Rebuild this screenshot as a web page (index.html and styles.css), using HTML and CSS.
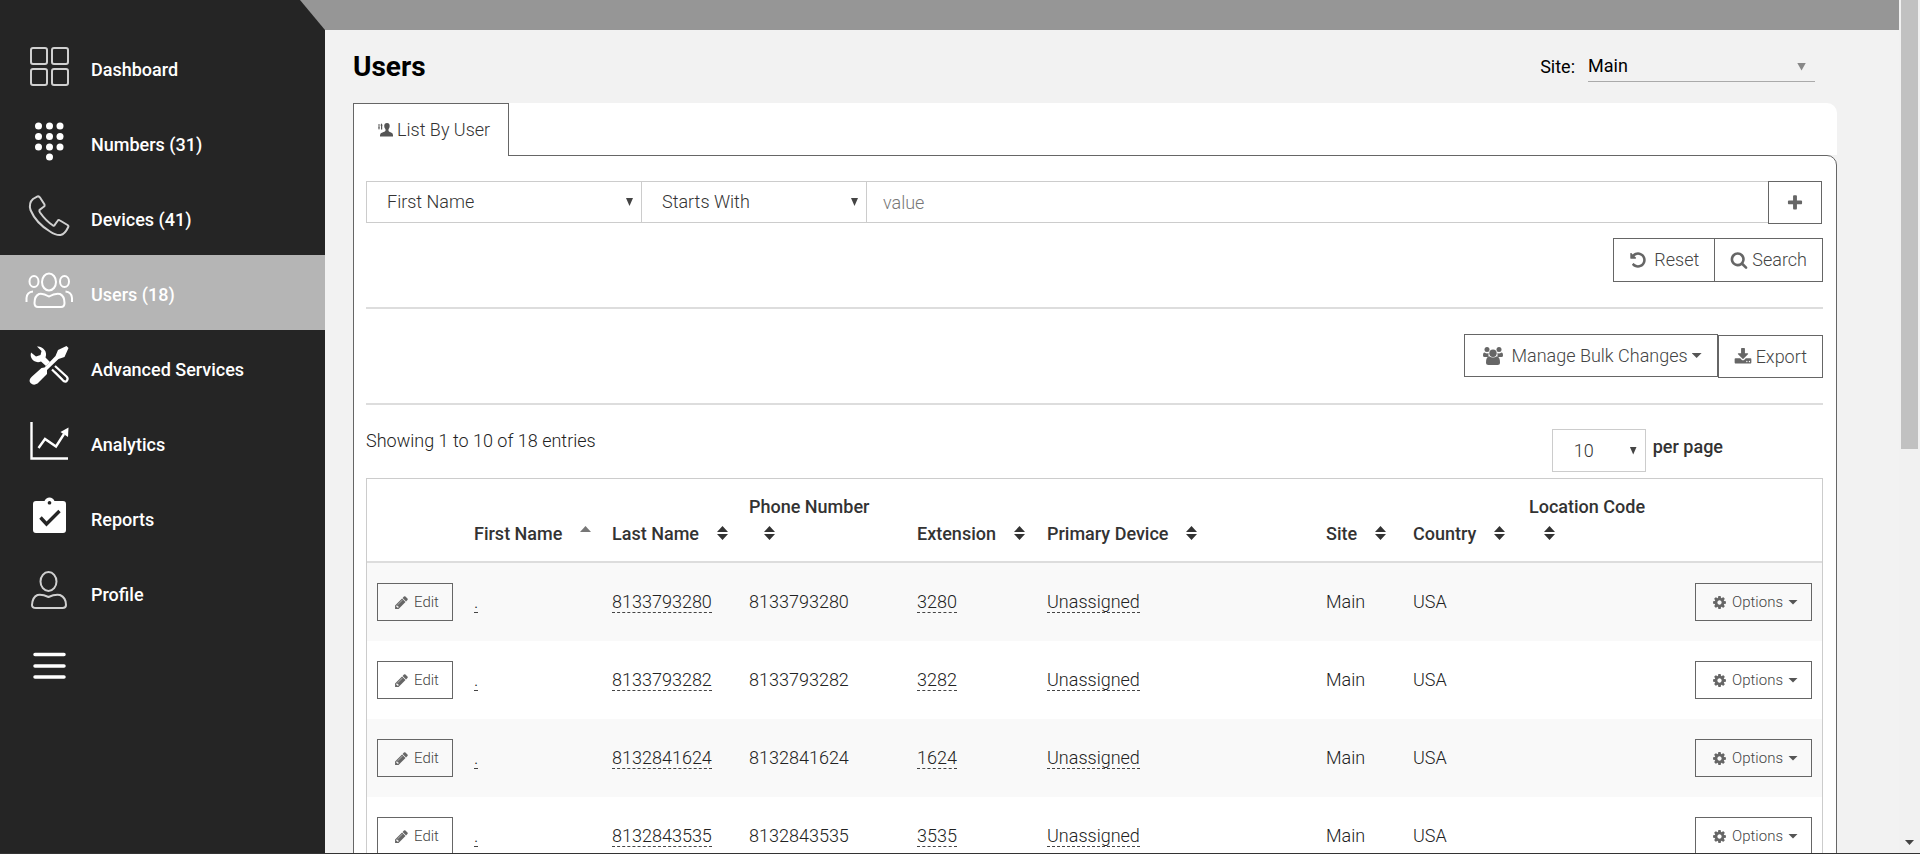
FILE: index.html
```html
<!DOCTYPE html>
<html lang="en">
<head>
<meta charset="utf-8">
<title>Users</title>
<link rel="stylesheet" href="styles.css">
</head>
<body>
<svg class="sprite" aria-hidden="true">
  <symbol id="i-plus" viewBox="0 0 1792 1792"><path d="M1600 736v192q0 40-28 68t-68 28h-416v416q0 40-28 68t-68 28h-192q-40 0-68-28t-28-68v-416h-416q-40 0-68-28t-28-68v-192q0-40 28-68t68-28h416v-416q0-40 28-68t68-28h192q40 0 68 28t28 68v416h416q40 0 68 28t28 68z"/></symbol>
  <symbol id="i-search" viewBox="0 0 1792 1792"><path d="M1216 832q0-185-131.500-316.500t-316.500-131.500-316.500 131.500-131.500 316.500 131.500 316.500 316.500 131.500 316.500-131.500 131.500-316.500zm512 832q0 52-38 90t-90 38q-54 0-90-38l-343-342q-179 124-399 124-143 0-273.500-55.500t-225-150-150-225-55.500-273.500 55.500-273.500 150-225 225-150 273.500-55.500 273.500 55.500 225 150 150 225 55.500 273.500q0 220-124 399l343 343q37 37 37 90z"/></symbol>
  <symbol id="i-undo" viewBox="0 0 1792 1792"><path d="M1664 896q0 156-61 298t-164 245-245 164-298 61q-172 0-327-72.500t-264-204.500q-7-10-6.500-22.500t8.500-20.500l137-138q10-9 25-9 16 2 23 12 73 95 179 147t225 52q104 0 198.500-40.500t163.500-109.500 109.500-163.500 40.500-198.500-40.500-198.500-109.500-163.500-163.500-109.500-198.500-40.500q-98 0-188 35.500t-160 101.500l137 138q31 30 14 69-17 40-59 40h-448q-26 0-45-19t-19-45v-448q0-42 40-59 39-17 69 14l130 129q107-101 244.500-156.500t284.500-55.500q156 0 298 61t245 164 164 245 61 298z"/></symbol>
  <symbol id="i-download" viewBox="0 0 1792 1792"><path d="M1344 1344q0-26-19-45t-45-19-45 19-19 45 19 45 45 19 45-19 19-45zm256 0q0-26-19-45t-45-19-45 19-19 45 19 45 45 19 45-19 19-45zm128-224v320q0 40-28 68t-68 28h-1472q-40 0-68-28t-28-68v-320q0-40 28-68t68-28h465l135 136q58 56 136 56t136-56l136-136h464q40 0 68 28t28 68zm-325-569q17 41-14 70l-448 448q-18 19-45 19t-45-19l-448-448q-31-29-14-70 17-39 59-39h256v-448q0-26 19-45t45-19h256q26 0 45 19t19 45v448h256q42 0 59 39z"/></symbol>
  <symbol id="i-pencil" viewBox="0 0 1792 1792"><path d="M491 1536l91-91-235-235-91 91v107h128v128h107zm523-928q0-22-22-22-10 0-17 7l-542 542q-7 7-7 17 0 22 22 22 10 0 17-7l542-542q7-7 7-17zm-54-192l416 416-832 832h-416v-416zm683 96q0 53-37 90l-166 166-416-416 166-165q36-38 90-38 53 0 91 38l235 234q37 39 37 91z"/></symbol>
  <symbol id="i-cog" viewBox="0 0 1792 1792"><path d="M1152 896q0-106-75-181t-181-75-181 75-75 181 75 181 181 75 181-75 75-181zm512-109v222q0 12-8 23t-20 13l-185 28q-19 54-39 91 35 50 107 138 10 12 10 25t-9 23q-27 37-99 108t-94 71q-12 0-26-9l-138-108q-44 23-91 38-16 136-29 186-7 28-36 28h-222q-14 0-24.500-8.500t-11.500-21.500l-28-184q-49-16-90-37l-141 107q-10 9-25 9-14 0-25-11-126-114-165-168-7-10-7-23 0-12 8-23 15-21 51-66.500t54-70.500q-27-50-41-99l-183-27q-13-2-21-12.500t-8-23.500v-222q0-12 8-23t19-13l186-28q14-46 39-92-40-57-107-138-10-12-10-24 0-10 9-23 26-36 98.500-107.500t94.500-71.500q13 0 26 10l138 107q44-23 91-38 16-136 29-186 7-28 36-28h222q14 0 24.500 8.500t11.500 21.500l28 184q49 16 90 37l142-107q9-9 24-9 13 0 25 10 129 119 165 170 7 8 7 22 0 12-8 23-15 21-51 66.500t-54 70.500q26 50 41 98l183 28q13 2 21 12.500t8 23.500z"/></symbol>
  <symbol id="i-group" viewBox="0 0 20 18"><circle cx="4" cy="2.600" r="2.500"/><circle cx="16" cy="2.600" r="2.500"/><path d="M1.500 5.500Q4 7 5.500 6v4H1.500Q0 10 0 8.500 0 5.500 1.500 5.500zM18.500 5.500Q16 7 14.500 6v4h4Q20 10 20 8.500 20 5.500 18.500 5.500z"/><circle cx="10" cy="6.300" r="3.700"/><path d="M6 9.200Q10 12 14 9.200 17 10 17 15.500q0 2.500-2.500 2.500h-9Q3 18 3 15.500 3 10 6 9.200z"/></symbol>
  <symbol id="i-sort" viewBox="0 0 11 14"><path d="M0 6L5.500 0 11 6zM0 8h11l-5.500 6z"/></symbol>
  <symbol id="i-asc" viewBox="0 0 11 14"><path d="M0 6L5.500 0 11 6z"/></symbol>
</svg>
<div class="app">
  <nav class="sidebar" aria-label="Main">
    <a class="nav-item" href="#"><svg class="nav-icon thin" viewBox="0 0 48 48"><rect x="6" y="6" width="16" height="16" rx="2"/><rect x="27" y="6" width="16" height="16" rx="2"/><rect x="6" y="27" width="16" height="16" rx="2"/><rect x="27" y="27" width="16" height="16" rx="2"/></svg><span>Dashboard</span></a>
    <a class="nav-item" href="#"><svg class="nav-icon solid" viewBox="0 0 48 48"><circle cx="13.500" cy="9" r="3.500"/><circle cx="24.500" cy="9" r="3.500"/><circle cx="35" cy="9" r="3.500"/><circle cx="13.500" cy="19.500" r="3.500"/><circle cx="24.500" cy="19.500" r="3.500"/><circle cx="35" cy="19.500" r="3.500"/><circle cx="13.500" cy="30" r="3.500"/><circle cx="24.500" cy="30" r="3.500"/><circle cx="35" cy="30" r="3.500"/><circle cx="24.500" cy="40" r="3.500"/></svg><span>Numbers (31)</span></a>
    <a class="nav-item" href="#"><svg class="nav-icon thin" viewBox="0 0 48 48"><path d="M12.500 4.500Q14 4 15 5.500L19.500 12.500Q20 14 19 14.500L14.500 18Q14 19 15 20.500 21 29 28 33.500 29.500 34 30 32.500L32.500 29Q33.500 27.500 35 28.500L42.500 33Q44 34 43 35.500 40 42 35.500 43 31 43.500 25 39.500 11 31 5.500 18 3.500 11 8 7z"/></svg><span>Devices (41)</span></a>
    <a class="nav-item active" href="#"><svg class="nav-icon" viewBox="0 0 48 48"><ellipse cx="24" cy="15" rx="7" ry="8.500"/><ellipse cx="9" cy="14.500" rx="4.500" ry="5.500"/><ellipse cx="39.500" cy="14.500" rx="4.500" ry="5.500"/><path d="M1.500 35V31Q2 25 8 24.500M47 35V31Q46.500 25 40.500 24.500M14 27Q18 26 24 29.500 30 26 35 27 39.500 29 39.500 36 39.500 40 36 40H13Q9.500 40 9.500 36 9.500 29 14 27z"/></svg><span>Users (18)</span></a>
    <a class="nav-item" href="#"><svg class="nav-icon solid" viewBox="0 0 48 48"><path d="M12 4.500l4.500 4.500-1 4-4.500 1.500L6 10.500Q4.500 16 9 19q3.500 2 7 .5l5 4.500 4-4-4.500-4.500Q22 11 19.500 8 16.500 4 12 4.500z"/><path d="M27 27.500l11.500 11.500q2.500 1.500 3.500-.5 1.500-2-.5-4L30 24" fill="none" stroke="#fff" stroke-width="2.200"/><path d="M30 30l8 8" stroke="#fff" stroke-width="1.500"/><path d="M43.500 6L41.500 4l-8.500 4-2.500 6-11 11.500-3 .5L7 34.500q-4 3.500-1.500 6.500 3 3 7 .5L22 32v-4L33.500 17l6-2z"/></svg><span>Advanced Services</span></a>
    <a class="nav-item" href="#"><svg class="nav-icon" viewBox="0 0 48 48"><path d="M6.500 5v36.500H43M13.500 31L20 22l11 7.500L39 17" stroke-width="2.400"/><path d="M43.500 10.500l-.5 9.500-7.500-5z" fill="#fff" stroke="none"/></svg><span>Analytics</span></a>
    <a class="nav-item" href="#"><svg class="nav-icon solid" viewBox="0 0 48 48"><path fill-rule="evenodd" d="M11 9h8.500Q21 5.500 24.500 5.500T29.500 9H38q3 0 3 3v26q0 3-3 3H11q-3 0-3-3V12q0-3 3-3zM24.500 9a1.800 1.800 0 1 0 .01 0z"/><path d="M15.500 25.500l6 6.500L34.500 19" stroke="#252525" stroke-width="3.400" fill="none"/></svg><span>Reports</span></a>
    <a class="nav-item" href="#"><svg class="nav-icon thin" viewBox="0 0 48 48"><ellipse cx="23.500" cy="14.500" rx="8" ry="9.500"/><path d="M12.500 28Q17 27 23.500 30 30 27 35 28 41 30.500 41 38 41 41 37.500 41H11Q7 41 7 38 7.500 30 12.500 28z"/></svg><span>Profile</span></a>
    <button class="nav-item" type="button" aria-label="Menu"><svg class="nav-icon" viewBox="0 0 48 48"><path d="M10 12.500h29M10 24h29M10 35h29" stroke-width="3.500" stroke-linecap="round"/></svg></button>
  </nav>
  <div class="page">
    <div class="topbar"></div>
    <main class="main">
      <header class="page-head">
        <h1 class="title">Users</h1>
        <div class="site">
          <label for="site">Site:</label>
          <span class="pick pick-site"><select id="site"><option>Main</option></select></span>
        </div>
      </header>
      <div class="tabs"><button class="tab" type="button"><svg class="tab-icon" viewBox="0 0 15 14"><path d="M9 0q2.700 0 2.700 3 0 1.800-1.200 3.200v1.600q0 .7 2 1.400Q15 10 15 12v1.500H2V12q0-2 3-2.800 2.500-.6 2.500-1.400V6.200Q6.200 5 6.200 3 6.200 0 9 0z"/><path d="M.5 1h1v3.500H2L1 7 0 4.500h.5zM3 6.500v-4h-.7L3.500.3l1.200 2.200H4.200v4z"/></svg>List By User</button></div>
      <section class="panel">
        <form class="filter">
          <span class="pick field"><select aria-label="Field"><option>First Name</option></select></span>
          <span class="pick match"><select aria-label="Match"><option>Starts With</option></select></span>
          <input class="value" type="text" placeholder="value" aria-label="Value">
          <button class="btn add" type="button" aria-label="Add filter"><svg class="icon"><use href="#i-plus"/></svg></button>
        </form>
        <div class="actions search-actions">
          <button class="btn" type="button"><svg class="icon wide-gap"><use href="#i-undo"/></svg>Reset</button>
          <button class="btn joined" type="button"><svg class="icon"><use href="#i-search"/></svg>Search</button>
        </div>
        <hr>
        <div class="actions bulk-actions">
          <button class="btn bulk" type="button"><svg class="icon group"><use href="#i-group"/></svg>Manage Bulk Changes<span class="caret"></span></button>
          <button class="btn export" type="button"><svg class="icon"><use href="#i-download"/></svg>Export</button>
        </div>
        <hr>
        <div class="summary">
          <p class="showing">Showing 1 to 10 of 18 entries</p>
          <div class="paging"><span class="pick pick-count"><select id="count"><option>10</option></select></span><label for="count">per page</label></div>
        </div>
        <table class="users">
          <colgroup><col class="c-edit"><col class="c-first"><col class="c-last"><col class="c-phone"><col class="c-ext"><col class="c-device"><col class="c-site"><col class="c-country"><col class="c-loc"><col class="c-opt"></colgroup>
          <thead><tr><th></th>
            <th>First Name<svg class="sort asc"><use href="#i-asc"/></svg></th>
            <th>Last Name<svg class="sort"><use href="#i-sort"/></svg></th>
            <th>Phone Number<br><svg class="sort below"><use href="#i-sort"/></svg></th>
            <th>Extension<svg class="sort"><use href="#i-sort"/></svg></th>
            <th>Primary Device<svg class="sort"><use href="#i-sort"/></svg></th>
            <th>Site<svg class="sort"><use href="#i-sort"/></svg></th>
            <th>Country<svg class="sort"><use href="#i-sort"/></svg></th>
            <th>Location Code<br><svg class="sort below"><use href="#i-sort"/></svg></th>
            <th></th></tr></thead>
          <tbody>
            <tr><td><button class="btn small" type="button"><svg class="icon"><use href="#i-pencil"/></svg>Edit</button></td><td><a href="#">.</a></td><td><a href="#">8133793280</a></td><td>8133793280</td><td><a href="#">3280</a></td><td><a href="#">Unassigned</a></td><td>Main</td><td>USA</td><td></td><td class="end"><button class="btn small" type="button"><svg class="icon"><use href="#i-cog"/></svg>Options<span class="caret"></span></button></td></tr>
            <tr><td><button class="btn small" type="button"><svg class="icon"><use href="#i-pencil"/></svg>Edit</button></td><td><a href="#">.</a></td><td><a href="#">8133793282</a></td><td>8133793282</td><td><a href="#">3282</a></td><td><a href="#">Unassigned</a></td><td>Main</td><td>USA</td><td></td><td class="end"><button class="btn small" type="button"><svg class="icon"><use href="#i-cog"/></svg>Options<span class="caret"></span></button></td></tr>
            <tr><td><button class="btn small" type="button"><svg class="icon"><use href="#i-pencil"/></svg>Edit</button></td><td><a href="#">.</a></td><td><a href="#">8132841624</a></td><td>8132841624</td><td><a href="#">1624</a></td><td><a href="#">Unassigned</a></td><td>Main</td><td>USA</td><td></td><td class="end"><button class="btn small" type="button"><svg class="icon"><use href="#i-cog"/></svg>Options<span class="caret"></span></button></td></tr>
            <tr><td><button class="btn small" type="button"><svg class="icon"><use href="#i-pencil"/></svg>Edit</button></td><td><a href="#">.</a></td><td><a href="#">8132843535</a></td><td>8132843535</td><td><a href="#">3535</a></td><td><a href="#">Unassigned</a></td><td>Main</td><td>USA</td><td></td><td class="end"><button class="btn small" type="button"><svg class="icon"><use href="#i-cog"/></svg>Options<span class="caret"></span></button></td></tr>
          </tbody>
        </table>
      </section>
    </main>
  </div>
  <div class="scrollbar" aria-hidden="true"><div class="thumb"></div><div class="down"></div></div>
</div>
</body>
</html>
```
FILE: styles.css
```css
* { box-sizing: border-box; }
body { margin: 0; font: 300 18px/24px Roboto, "Liberation Sans", sans-serif; color: #222; background: #f2f2f2; }
button, select, input { font: inherit; color: inherit; margin: 0; border-radius: 0; }
.sprite { position: absolute; width: 0; height: 0; }
.app { display: flex; height: 100vh; overflow: hidden; border-bottom: 1px solid #333; }

.sidebar { flex: 0 0 325px; background: #252525; padding-top: 30px; display: flex; flex-direction: column; }
.nav-item { display: flex; flex: none; align-items: center; gap: 18px; height: 75px; padding: 0 25px; border: 0; background: none; color: #fff; font-weight: 500; text-decoration: none; }
.nav-item span { padding-top: 4px; }
.nav-item.active { background: #b5b5b5; }
.nav-icon { width: 48px; height: 48px; fill: none; stroke: #fff; stroke-width: 2; margin-bottom: 4px; }
.nav-icon.thin { stroke: #d0d0d0; }
.nav-icon.solid { fill: #fff; stroke: none; }

.page { flex: 1; min-width: 0; display: flex; flex-direction: column; }
.topbar { position: relative; height: 30px; flex: none; background: #969696; }
.topbar::before { content: ""; position: absolute; right: 100%; top: 0; width: 25px; height: 30px; background: inherit; clip-path: polygon(0 0, 100% 0, 100% 100%); }
.main { padding: 0 62px 0 28px; }
.page-head { display: flex; align-items: center; justify-content: space-between; height: 73px; padding-right: 22px; color: #000; }
.title { margin: 0; font-size: 28px; line-height: 36px; font-weight: 700; }
.site { display: flex; align-items: center; gap: 13px; font-weight: 400; }

.pick { position: relative; display: block; }
.pick select { appearance: none; width: 100%; height: 42px; padding: 0 20px; border: 1px solid #ccc; background: #fff; color: #333; display: block; }
.pick::after { content: ""; position: absolute; right: 9px; top: 50%; margin-top: -4px; width: 7px; height: 8px; background: #444; clip-path: polygon(0 0, 100% 0, 50% 100%); pointer-events: none; }
.pick-site { width: 227px; }
.pick-site select { height: 30px; padding: 0; border-width: 0 0 1px; border-color: #aaa; background: none; color: #000; }
.pick-site::after { background: #888; width: 9px; }

.tabs { display: flex; background: #fff; border-radius: 0 10px 0 0; }
.tab { display: flex; align-items: center; gap: 4px; height: 53px; padding: 0 18px 0 24px; margin-bottom: -1px; border: 1px solid #666; border-bottom: 0; background: #fff; color: #333; position: relative; }
.tab-icon { width: 15px; height: 14px; fill: #555; }
.panel { border: 1px solid #666; border-radius: 0 10px 0 0; background: #fff; padding: 25px 13px 0 12px; }

.filter { display: flex; align-items: flex-start; padding-right: 1px; }
.field { width: 276px; }
.match { width: 226px; margin-left: -1px; }
.value { flex: 1; height: 42px; margin-left: -1px; border: 1px solid #ccc; padding: 0 16px; background: #fff; }
.value::placeholder { color: #777; opacity: 1; }
.btn { display: flex; align-items: center; justify-content: center; gap: 4px; height: 44px; padding: 0 15px; border: 1px solid #666; background: transparent; color: #444; white-space: nowrap; }
.btn.add { width: 54px; height: 43px; margin-left: -1px; }
.icon { width: 18px; height: 18px; fill: #666; flex: none; }
.wide-gap { margin-right: 3px; }
.icon.group { width: 20px; height: 18px; margin-right: 4px; }
.caret { flex: none; width: 10px; height: 5px; background: #555; clip-path: polygon(0 0, 100% 0, 50% 100%); }
.actions { display: flex; justify-content: flex-end; }
.search-actions { margin: 14px 0 25px; }
.joined { margin-left: -1px; }
.bulk-actions { align-items: flex-end; height: 44px; margin: 25px 0; }
.bulk { align-self: flex-start; height: 43px; padding: 0 15px 0 18px; }
.export { height: 43px; }
hr { margin: 0; border: 0; border-top: 2px solid #ddd; }

.summary { display: flex; justify-content: space-between; padding: 24px 100px 6px 0; }
.showing { margin: 0; }
.paging { display: flex; gap: 7px; font-weight: 500; color: #333; }
.paging label { padding-top: 6px; }
.pick-count { width: 94px; font-weight: 300; }
.pick-count select { height: 43px; padding: 0 21px; }

.users { width: 100%; table-layout: fixed; border-collapse: separate; border-spacing: 0; border: 1px solid #ccc; }
.users th { height: 84px; padding: 14px 10px; border-bottom: 2px solid #ddd; text-align: left; vertical-align: bottom; font-weight: 500; line-height: 27px; white-space: nowrap; color: #333; }
.users td { padding: 20px 10px; height: 78px; vertical-align: middle; }
.users tbody tr:nth-child(odd) { background: #f9f9f9; }
.users a { color: inherit; text-decoration: none; border-bottom: 1px dashed #444; }
.users .end .btn { margin-left: auto; }
.c-edit { width: 97px; } .c-first { width: 138px; } .c-last { width: 137px; } .c-phone { width: 168px; } .c-ext { width: 130px; }
.c-device { width: 279px; } .c-site { width: 87px; } .c-country { width: 116px; } .c-loc { width: 165px; } .c-opt { width: 138px; }
.sort { width: 11px; height: 14px; margin-left: 18px; fill: #333; }
.sort.asc { fill: #777; }
.sort.below { margin-left: 15px; }
.btn.small { height: 38px; padding: 0 13px 0 16px; font-size: 15px; line-height: 20px; gap: 5px; }
.small .icon { width: 15px; height: 15px; }

.scrollbar { position: relative; flex: 0 0 21px; background: #f1f1f1; padding-left: 2px; }
.thumb { width: 17px; height: 449px; background: #c1c1c1; }
.down { position: absolute; left: 6px; bottom: 8px; width: 9px; height: 5px; background: #444; clip-path: polygon(0 0, 100% 0, 50% 100%); }
```
